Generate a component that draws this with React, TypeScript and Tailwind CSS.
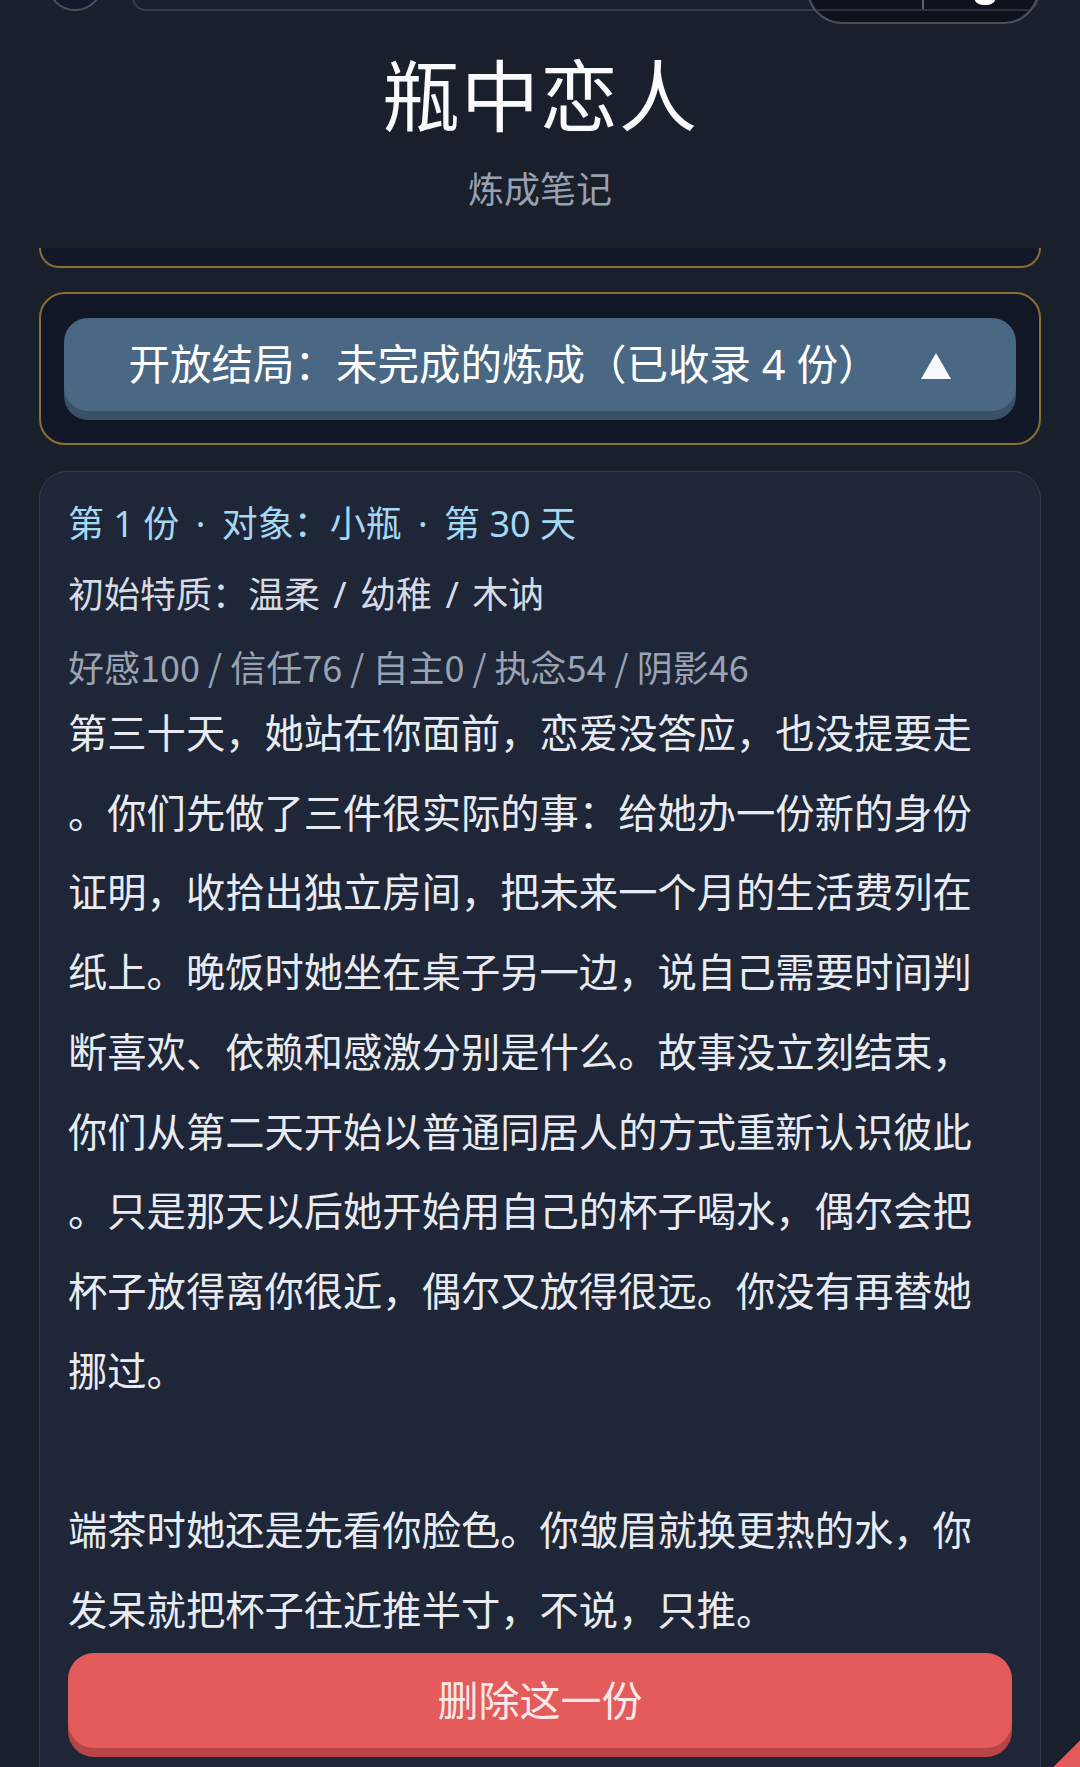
import React from 'react';

const body1 =
  '第三十天，她站在你面前，恋爱没答应，也没提要走。你们先做了三件很实际的事：给她办一份新的身份证明，收拾出独立房间，把未来一个月的生活费列在纸上。晚饭时她坐在桌子另一边，说自己需要时间判断喜欢、依赖和感激分别是什么。故事没立刻结束，你们从第二天开始以普通同居人的方式重新认识彼此。只是那天以后她开始用自己的杯子喝水，偶尔会把杯子放得离你很近，偶尔又放得很远。你没有再替她挪过。';

const body2 = '端茶时她还是先看你脸色。你皱眉就换更热的水，你发呆就把杯子往近推半寸，不说，只推。';

// floating toolbar, scrolled mostly out of view
const TopBar = () => (
  <div className="absolute top-[-46px] inset-x-0 flex items-end pl-[47px] pr-[41px]">
    <div className="shrink-0 w-[56px] h-[56px] mb-[13px] rounded-full border-2 border-[#4a5263] bg-[#121a2b]" />
    <div className="flex-1 ml-[29px] h-[51px] mb-[13px] rounded-[14px] border-2 border-[#363d4d]" />
    <div className="shrink-0 -ml-[232px] w-[232px] h-[70px] rounded-full border-2 border-[#4a5060] bg-[#0d1119]/85 overflow-hidden flex flex-col">
      <div className="flex h-[53px] items-end">
        <div className="w-[113px]" />
        <div className="w-[2px] h-full bg-[#5b6270]" />
        <div className="ml-[50px] mb-[4px] w-[22px] h-[17px] rounded-full bg-white" />
      </div>
      <div className="h-[2px] bg-[#2c3240]" />
    </div>
  </div>
);

const Dot = () => <span className="mx-[7px]">·</span>;

export default function App() {
  return (
    <div className="relative w-full h-[1767px] overflow-hidden bg-[#1a1f2c] font-['Noto_Sans','Noto_Sans_CJK_SC',sans-serif]">
      <TopBar />

      {/* header */}
      <div className="h-[248px] flex flex-col items-center pt-[53px] font-['Noto_Sans_CJK_SC',sans-serif]">
        <h1 className="text-[78px] leading-none font-normal text-[#f8fafc] tracking-[1px]">瓶中恋人</h1>
        <div className="mt-[38px] text-[36px] leading-none text-[#98a1b0]">炼成笔记</div>
      </div>

      <div className="px-[39px]">
        {/* previous card, mostly hidden under the header */}
        <div className="h-[20px] border-x-2 border-b-2 border-[#8c6d32] rounded-b-[22px] bg-[#121827]" />

        {/* endings accordion */}
        <div className="mt-[24px] border-2 border-[#8c6d32] rounded-[26px] bg-[#111726] px-[23px] pt-[24px] pb-[32px]">
          <button className="w-full h-[93px] rounded-[24px] bg-[#4a6884] shadow-[0_9px_0_#3a5066] flex items-center justify-center gap-[42px] text-white">
            <span className="text-[41.5px] leading-none">开放结局：未完成的炼成（已收录 4 份）</span>
            <svg width="30" height="26" viewBox="0 0 30 26" className="mt-[2px]">
              <path d="M15 0 L30 26 L0 26 Z" fill="#f8fafc" />
            </svg>
          </button>
        </div>

        {/* record card */}
        <div className="mt-[26px] h-[1400px] border border-[#343d50] rounded-[28px] bg-[#1f2637] px-[28px] pt-[27px] flex flex-col">
          <div className="flex flex-col gap-[21px] text-[36px] leading-[50px]">
            <div className="text-[#a5d8f3]">
              第 1 份 <Dot /> 对象：小瓶 <Dot /> 第 30 天
            </div>
            <div className="text-[#d6dbe4] [word-spacing:4px]">初始特质：温柔 / 幼稚 / 木讷</div>
            <div className="text-[#9aa3b2] font-['Noto_Sans_CJK_SC',sans-serif]">好感100 / 信任76 / 自主0 / 执念54 / 阴影46</div>
          </div>
          <p className="mr-[10px] font-['Noto_Sans_CJK_SC',sans-serif] text-[39.3px] leading-[79.7px] text-[#e8ecf2] whitespace-pre-wrap [line-break:anywhere]">
            {body1 + '\n\n' + body2}
          </p>
          <button className="mt-[6px] w-full h-[95px] shrink-0 rounded-[26px] bg-[#e45b5b] shadow-[0_9px_0_#b84545] flex items-center justify-center text-[41px] leading-none text-[#fde9e9]">
            删除这一份
          </button>
        </div>
      </div>

      {/* floating button peeking in from the corner */}
      <div className="absolute left-[1060px] top-[1737px] w-[80px] h-[80px] rotate-45 rounded-[10px] bg-[#e45b5b]" />
    </div>
  );
}
